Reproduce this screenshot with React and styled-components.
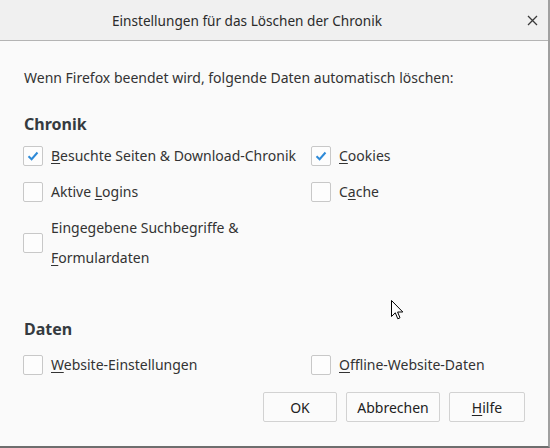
import React from "react";
import styled, { createGlobalStyle } from "styled-components";

const GlobalStyle = createGlobalStyle`
  html, body {
    margin: 0;
    padding: 0;
    background: #fafafa;
  }
  body {
    font-family: "Noto Sans", "Open Sans", sans-serif;
    color: #333;
  }
`;

const Window = styled.div`
  position: relative;
  width: 548px;
  height: 446px;
  background: #fafafa;
  border-right: 2px solid #a0a0a0;
  border-bottom: 2px solid #6e6e6e;
  display: flex;
  flex-direction: column;
`;

const TitleBar = styled.div`
  height: 40px;
  flex: none;
  background: #f0f0f0;
  border-bottom: 1px solid #b4b4b4;
  display: flex;
  align-items: center;
  justify-content: center;
  padding-right: 54px;
  position: relative;
  font-size: 13.6px;
  color: #2b2b2b;
`;

const CloseButton = styled.div`
  position: absolute;
  right: 8px;
  top: 12px;
  width: 16px;
  height: 16px;
  display: flex;
  align-items: center;
  justify-content: center;
`;

const Body = styled.div`
  flex: 1;
  padding: 27px 23px 0 24px;
  display: flex;
  flex-direction: column;
`;

const Intro = styled.div`
  font-size: 14px;
  line-height: 20px;
  height: 20px;
`;

const SectionTitle = styled.div`
  font-size: 16px;
  font-weight: 700;
  line-height: 24px;
  margin-top: ${({ $top }) => $top}px;
  color: #353a40;
`;

const Grid = styled.div`
  display: grid;
  grid-template-columns: 288px 1fr;
  row-gap: ${({ $gap }) => $gap || 6}px;
  margin-top: ${({ $top }) => $top}px;
  margin-left: -1px;
`;

const Row = styled.label`
  display: flex;
  align-items: center;
  gap: 8px;
  font-size: 14px;
  line-height: 30px;
`;

const Box = styled.span`
  width: 18px;
  height: 18px;
  flex: none;
  border: 1px solid #c8c8c8;
  border-radius: 2px;
  background: #fdfdfd;
  display: flex;
  align-items: center;
  justify-content: center;
`;

const Key = styled.span`
  text-decoration: underline;
  text-underline-offset: 2px;
`;

const Footer = styled.div`
  margin-top: 12px;
  display: flex;
  justify-content: flex-end;
  gap: 9px;
`;

const Button = styled.button`
  width: ${({ $w }) => $w}px;
  height: 30px;
  border: 1px solid #d2d2d2;
  border-radius: 2px;
  background: #fbfbfb;
  font-family: inherit;
  font-size: 14px;
  color: #222;
  padding: 0;
`;

const Pointer = styled.svg`
  position: absolute;
  left: 391px;
  top: 300px;
`;

const Check = () => (
  <svg width="12" height="10" viewBox="0 0 12 10">
    <path d="M1.5 5.2 L4.6 8.2 L10.5 1.5" fill="none" stroke="#2e8ad8" strokeWidth="2" />
  </svg>
);

const Option = ({ checked, children }) => (
  <Row>
    <Box>{checked && <Check />}</Box>
    <span>{children}</span>
  </Row>
);

const App = () => (
  <>
    <GlobalStyle />
    <Window>
      <TitleBar>
        Einstellungen für das Löschen der Chronik
        <CloseButton>
          <svg width="11" height="11" viewBox="0 0 11 11">
            <path d="M1 1 L10 10 M10 1 L1 10" stroke="#3a3a3a" strokeWidth="1.3" />
          </svg>
        </CloseButton>
      </TitleBar>
      <Body>
        <Intro>Wenn Firefox beendet wird, folgende Daten automatisch löschen:</Intro>
        <SectionTitle $top={24}>Chronik</SectionTitle>
        <Grid $top={5}>
          <Option checked>
            <Key>B</Key>esuchte Seiten &amp; Download-Chronik
          </Option>
          <Option checked>
            <Key>C</Key>ookies
          </Option>
          <Option>
            Aktive <Key>L</Key>ogins
          </Option>
          <Option>
            C<Key>a</Key>che
          </Option>
          <Option>
            Eingegebene Suchbegriffe &amp;
            <br />
            <Key>F</Key>ormulardaten
          </Option>
        </Grid>
        <SectionTitle $top={44}>Daten</SectionTitle>
        <Grid $top={9}>
          <Option>
            <Key>W</Key>ebsite-Einstellungen
          </Option>
          <Option>
            <Key>O</Key>ffline-Website-Daten
          </Option>
        </Grid>
        <Footer>
          <Button $w={74}>OK</Button>
          <Button $w={94}>Abbrechen</Button>
          <Button $w={76}>
            <Key>H</Key>ilfe
          </Button>
        </Footer>
      </Body>
      <Pointer width="13" height="21" viewBox="0 0 13 21">
        <path
          d="M0.5 0.5 L0.5 16.5 L4.3 12.8 L6.8 18.8 L9 17.8 L6.6 12 L11.8 12 Z"
          fill="#fff"
          stroke="#000"
          strokeWidth="1"
          strokeLinejoin="miter"
        />
      </Pointer>
    </Window>
  </>
);

export default App;
